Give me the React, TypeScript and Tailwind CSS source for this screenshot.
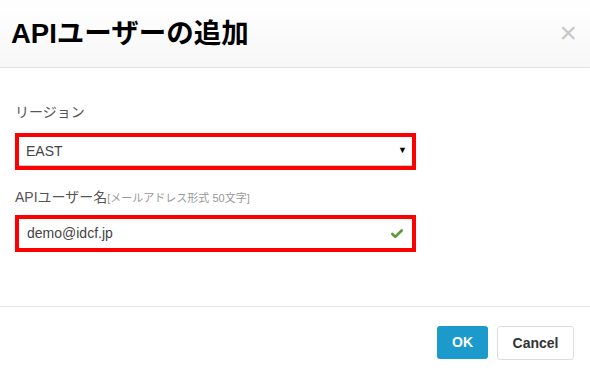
import { Check } from "lucide-react"

export default function App() {
  return (
    <div className="flex h-[376px] w-[590px] flex-col bg-white text-[#555] [font-family:'Liberation_Sans','Noto_Sans_CJK_JP',sans-serif]">
      <div className="flex h-[68px] items-center justify-between border-b border-[#e2e2e2] bg-gradient-to-b from-white to-[#f7f7f7] pl-[11px] pr-[13px]">
        <h1 className="text-[27.5px] font-bold leading-none text-black">APIユーザーの追加</h1>
        <span className="pb-[2px] text-[30px] leading-none text-[#c8c8c8]">×</span>
      </div>

      <div className="flex flex-1 flex-col px-[15px] pt-[34px]">
        <div className="h-5 text-[14px] leading-5">リージョン</div>
        <div className="mt-[11px] w-[401px] border-4 border-[#ff0000]">
          <div className="flex h-[29px] items-center justify-between border-b border-[#ccc] pl-[7px] pr-[5px] text-[14px] text-[#444]">
            <span>EAST</span>
            <span className="text-[9px] text-black">▼</span>
          </div>
        </div>

        <div className="mt-[17px] flex h-5 items-baseline text-[14px] leading-5">
          <span>APIユーザー名</span>
          <span className="text-[11px] text-[#999]">[メールアドレス形式 50文字]</span>
        </div>
        <div className="mt-[8px] w-[401px] border-4 border-[#ff0000]">
          <div className="flex h-[29px] items-center justify-between pl-[8px] pr-[8px] text-[14px] text-[#444]">
            <span>demo@idcf.jp</span>
            <Check size={14} strokeWidth={4.5} className="text-[#5a9a3a]" />
          </div>
        </div>
      </div>

      <div className="flex h-[70px] items-start justify-end gap-[9px] border-t border-[#e5e5e5] pr-[16px] pt-[19px]">
        <button className="h-[33px] w-[51px] rounded-[3px] bg-[#1b9acb] text-[14px] font-bold text-white">OK</button>
        <button className="h-[34px] w-[77px] rounded-[3px] border border-[#ddd] bg-white text-[14px] font-bold text-[#333]">Cancel</button>
      </div>
    </div>
  )
}
